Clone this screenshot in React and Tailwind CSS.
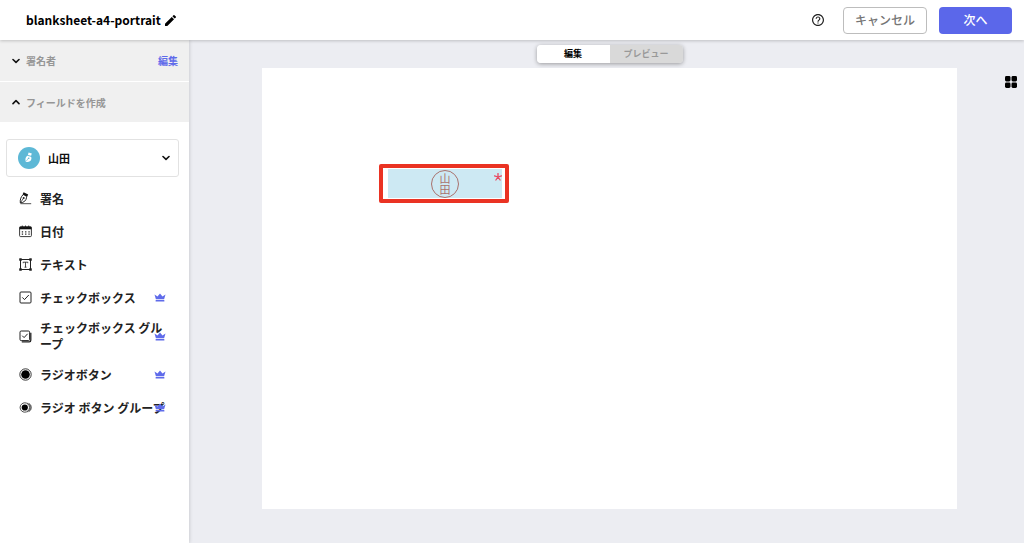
import React, { useState } from "react";

function Chevron({ up = false }) {
  return (
    <svg viewBox="0 0 8 8" className="size-2 shrink-0" fill="none" stroke="#111" strokeWidth="1.6" strokeLinecap="round" strokeLinejoin="round" aria-hidden="true">
      <path d={up ? "M1 5.6 4 2.7l3 2.9" : "M1 2.5 4 5.4l3-2.9"} />
    </svg>
  );
}

function PencilIcon() {
  return (
    <svg viewBox="3 3 18 18" className="size-[11px]" fill="#000" aria-hidden="true">
      <path d="M3 17.25V21h3.75L17.81 9.94l-3.75-3.75L3 17.25zM20.71 7.04a1 1 0 0 0 0-1.41l-2.34-2.34a1 1 0 0 0-1.41 0l-1.83 1.83 3.75 3.75 1.83-1.83z" />
    </svg>
  );
}

function HelpIcon() {
  return (
    <svg viewBox="2 2 20 20" className="size-3" fill="#222" aria-hidden="true">
      <path d="M11 18h2v-2h-2v2zm1-16C6.48 2 2 6.48 2 12s4.48 10 10 10 10-4.48 10-10S17.52 2 12 2zm0 18c-4.41 0-8-3.59-8-8s3.59-8 8-8 8 3.59 8 8-3.59 8-8 8zm0-14c-2.21 0-4 1.79-4 4h2c0-1.1.9-2 2-2s2 .9 2 2c0 2-3 1.75-3 5h2c0-2.25 3-2.5 3-5 0-2.21-1.79-4-4-4z" />
    </svg>
  );
}

function GridIcon() {
  return (
    <svg viewBox="0 0 12 12" className="size-3" fill="#000" aria-hidden="true">
      <rect x="0" y="0" width="5.5" height="5.5" rx="1.4" />
      <rect x="6.5" y="0" width="5.5" height="5.5" rx="1.4" />
      <rect x="0" y="6.5" width="5.5" height="5.5" rx="1.4" />
      <rect x="6.5" y="6.5" width="5.5" height="5.5" rx="1.4" />
    </svg>
  );
}

function CrownIcon() {
  return (
    <svg viewBox="0 0 12 9" className="h-[9px] w-3 shrink-0" fill="#5f6bea" role="img" aria-label="プレミアム">
      <path d="M1.9 6.3.5 1.6l3 2L6 .6l2.5 3 3-2-1.4 4.7z" />
      <rect x="1.6" y="7.1" width="8.8" height="1.4" rx="0.3" />
    </svg>
  );
}

function PenAvatar() {
  return (
    <svg viewBox="0 0 22 22" className="size-[22px] shrink-0" aria-hidden="true">
      <circle cx="11" cy="11" r="11" fill="#5db8d6" />
      <path d="m10.6 5.600 3.200.8-.7 2.400-3.200-.8z" fill="#fff" />
      <path d="M9.200 8.800c-1.700 1.300-2.200 3.500-1.400 6 2.700.6 5-.4 5.500-2.500.3-1.200.2-1.900-.4-2.600z" fill="#fff" />
      <path d="m8.200 14.300 2.100-3" stroke="#5db8d6" strokeWidth=".6" />
      <circle cx="10.700" cy="11.200" r=".8" fill="#5db8d6" />
    </svg>
  );
}

function FieldIcon({ children }) {
  return (
    <svg viewBox="0 0 13 13" className="size-[13px] shrink-0" fill="none" stroke="#222" strokeWidth="1" aria-hidden="true">
      {children}
    </svg>
  );
}

const signatureIcon = (
  <FieldIcon>
    <path d="M4.600.2 9.200 2.600 8 5 3.500 2.500z" fill="#111" stroke="none" />
    <path d="M3.800 3C2.200 4.600.9 7.200 1.300 10.900c3.600-.3 6-2.300 6.300-5.700" />
    <path d="m1.500 10.600 2.900-4.200" strokeWidth=".8" />
    <circle cx="4.700" cy="6.100" r="1" fill="#222" stroke="none" />
    <path d="M1.500 11.700h10.700" strokeWidth=".8" />
  </FieldIcon>
);

const dateIcon = (
  <FieldIcon>
    <rect x=".6" y="1.800" width="11.800" height="9.800" rx="1" strokeWidth=".9" />
    <path d="M.6 1.700h11.800v2.600H.6z" fill="#111" stroke="none" />
    <path d="M3.300.6v2M6.500.6v2M9.700.6v2" />
    <path d="M2.800 6.800h7.900M2.800 9.200h7.900" strokeWidth="1.200" strokeDasharray="1.300 2" />
  </FieldIcon>
);

const textIcon = (
  <FieldIcon>
    <rect x="1.500" y="1.500" width="10" height="10" />
    <path d="M4.200 5.200V4.200h4.600v1M6.500 4.200v5M5.500 9.200h2" strokeWidth=".8" />
    <g fill="#222" stroke="none">
      <rect x=".2" y=".2" width="2.600" height="2.600" rx=".5" />
      <rect x="10.200" y=".2" width="2.600" height="2.600" rx=".5" />
      <rect x=".2" y="10.200" width="2.600" height="2.600" rx=".5" />
      <rect x="10.200" y="10.200" width="2.600" height="2.600" rx=".5" />
    </g>
  </FieldIcon>
);

const checkboxIcon = (
  <FieldIcon>
    <rect x="1" y="1" width="11" height="11" rx="1" />
    <path d="m3.300 6.400 2.200 2.200 4.300-4.600" />
  </FieldIcon>
);

const checkboxGroupIcon = (
  <FieldIcon>
    <rect x="1" y="1" width="9.600" height="9.600" rx="1.200" />
    <path d="m3.200 5.700 1.900 1.900 3.500-3.800" />
    <path d="M11.800 2.800v7.400q0 1.600-1.600 1.600H2.800" strokeWidth="1.300" />
  </FieldIcon>
);

const radioIcon = (
  <FieldIcon>
    <circle cx="6.500" cy="6.500" r="5.700" strokeWidth=".9" />
    <circle cx="6.500" cy="6.500" r="4.300" fill="#000" stroke="none" />
  </FieldIcon>
);

const radioGroupIcon = (
  <FieldIcon>
    <circle cx="5.800" cy="6.500" r="4.700" strokeWidth=".8" />
    <circle cx="5.800" cy="6.500" r="3.100" fill="#000" stroke="none" />
    <path d="M8.400 2.200a4.500 4.500 0 0 1 0 8.600" strokeWidth=".7" />
    <path d="M9.900 2.300a4.800 4.800 0 0 1 0 8.400" strokeWidth=".7" />
  </FieldIcon>
);

const fields = [
  { label: "署名", icon: signatureIcon },
  { label: "日付", icon: dateIcon },
  { label: "テキスト", icon: textIcon },
  { label: "チェックボックス", icon: checkboxIcon, premium: true },
  { label: "チェックボックス グループ", icon: checkboxGroupIcon, premium: true },
  { label: "ラジオボタン", icon: radioIcon, premium: true },
  { label: "ラジオ ボタン グループ", icon: radioGroupIcon, premium: true },
];

function Header() {
  return (
    <header className="z-10 flex h-10 shrink-0 items-center bg-white pr-3 pl-[26px] shadow-[0_1px_3px_rgba(0,0,0,0.2)]">
      <h1 className="text-[12px] font-bold">blanksheet-a4-portrait</h1>
      <button type="button" aria-label="名前を変更" className="ml-1">
        <PencilIcon />
      </button>
      <div className="ml-auto flex items-center">
        <button type="button" aria-label="ヘルプ" className="mr-[19px]">
          <HelpIcon />
        </button>
        <button type="button" className="mr-3 h-[27px] w-[84px] rounded border border-[#bdbdbd] text-[12px] font-medium text-[#757575]">
          キャンセル
        </button>
        <button type="button" className="h-[27px] w-[73px] rounded bg-[#5b67ea] text-[12px] font-medium text-white">
          次へ
        </button>
      </div>
    </header>
  );
}

function Sidebar() {
  return (
    <aside className="z-[5] w-[189px] shrink-0 bg-white shadow-[0_0_4px_rgba(0,0,0,0.2)]">
      <div className="flex h-[41px] items-center justify-between bg-[#f0f0f0] pr-[11px] pl-3 text-[10px] font-bold">
        <button type="button" aria-expanded="false" className="flex items-center gap-[6px] text-[#969696]">
          <Chevron />
          署名者
        </button>
        <button type="button" className="text-[#5f6bea]">編集</button>
      </div>
      <div className="flex h-[41px] items-center border-t border-white bg-[#f0f0f0] pl-3 text-[10px] font-bold">
        <button type="button" aria-expanded="true" className="flex items-center gap-[6px] text-[#969696]">
          <Chevron up />
          フィールドを作成
        </button>
      </div>
      <div className="pt-[17px] pr-[10px] pl-[6px]">
        <label className="flex h-[38px] items-center rounded-[3px] border border-[#e2e2e2] pr-2 pl-[11px]">
          <PenAvatar />
          <select aria-label="署名者" className="min-w-0 flex-1 appearance-none bg-transparent pl-2 text-[11px] font-bold text-[#111] outline-none">
            <option>山田</option>
          </select>
          <Chevron />
        </label>
      </div>
      <ul className="pt-[5px]">
        {fields.map((field) => (
          <li key={field.label}>
            <button type="button" className="flex min-h-[33px] w-full items-center py-[6px] pr-[23px] pl-[19px] text-left text-[12px] leading-4 font-bold text-[#222]">
              {field.icon}
              <span className="ml-2 min-w-0 flex-1">
                <span className="-mr-3 block">{field.label}</span>
              </span>
              {field.premium && <CrownIcon />}
            </button>
          </li>
        ))}
      </ul>
    </aside>
  );
}

function ModeSwitch({ mode, onChange }) {
  const base = "w-[73px] text-[9px] leading-[18px] font-bold";
  return (
    <div role="tablist" className="flex overflow-hidden rounded shadow-[0_1px_4px_rgba(0,0,0,0.35)]">
      <button type="button" role="tab" aria-selected={mode === "edit"} onClick={() => onChange("edit")} className={`${base} ${mode === "edit" ? "bg-white text-black" : "bg-[#d9d9d9] text-[#999999]"}`}>
        編集
      </button>
      <button type="button" role="tab" aria-selected={mode === "preview"} onClick={() => onChange("preview")} className={`${base} ${mode === "preview" ? "bg-white text-black" : "bg-[#d9d9d9] text-[#999999]"}`}>
        プレビュー
      </button>
    </div>
  );
}

function Sheet() {
  return (
    <section aria-label="ドキュメント" className="relative flex-1 bg-white">
      <div className="absolute top-24 left-[117px] rounded-[2px] border-4 border-[#ea3323] py-[1px] pr-[3px] pl-[5px]">
        <button type="button" className="relative flex h-[29px] w-[114px] items-center justify-center bg-[#cde9f3]">
          <span className="flex size-7 items-center justify-center rounded-full border border-[#a9716c] text-[11px] leading-3 text-[#a9716c] [writing-mode:vertical-rl]">
            山田
          </span>
          <svg viewBox="0 0 8 8" className="absolute top-1 right-0 size-2" fill="none" stroke="#e8475f" strokeWidth="1.3" strokeLinecap="round" role="img" aria-label="必須">
            <path d="M4 .5V4M4 4 .5 2.9M4 4l3.5-1.1M4 4 1.9 7M4 4l2.1 3" />
          </svg>
        </button>
      </div>
    </section>
  );
}

export default function App() {
  const [mode, setMode] = useState("edit");
  return (
    <div lang="ja" className="flex min-h-screen flex-col bg-[#ecedf2] font-['Noto_Sans_CJK_JP','Noto_Sans',sans-serif] text-black">
      <Header />
      <div className="flex flex-1">
        <Sidebar />
        <main className="flex min-w-0 flex-1 pr-[7px] pl-[73px]">
          <div className="flex min-w-0 flex-1 flex-col pt-[5px] pb-[34px]">
            <div className="mb-[5px] flex justify-center">
              <ModeSwitch mode={mode} onChange={setMode} />
            </div>
            <Sheet />
          </div>
          <div className="flex w-[60px] items-start justify-end pt-9">
            <button type="button" aria-label="ページ一覧">
              <GridIcon />
            </button>
          </div>
        </main>
      </div>
    </div>
  );
}
